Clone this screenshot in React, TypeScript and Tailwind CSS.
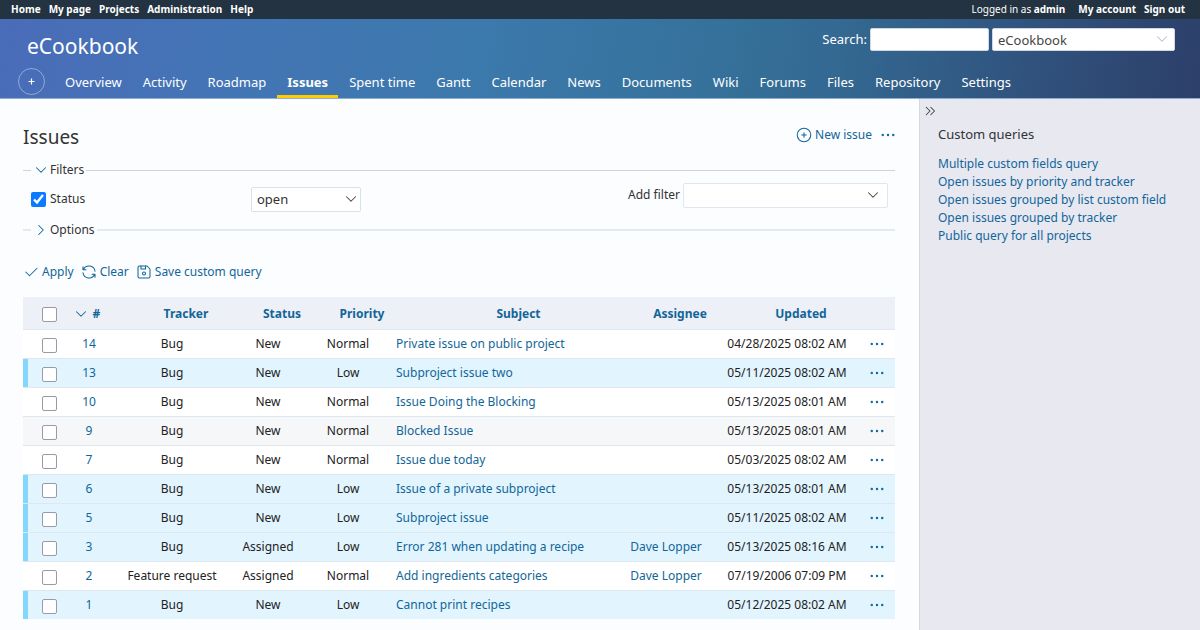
import type { ReactNode } from "react";

type Issue = {
  id: number;
  tracker: string;
  status: string;
  priority: string;
  subject: string;
  assignee?: string;
  updated: string;
};

const issues: Issue[] = [
  { id: 14, tracker: "Bug", status: "New", priority: "Normal", subject: "Private issue on public project", updated: "04/28/2025 08:02 AM" },
  { id: 13, tracker: "Bug", status: "New", priority: "Low", subject: "Subproject issue two", updated: "05/11/2025 08:02 AM" },
  { id: 10, tracker: "Bug", status: "New", priority: "Normal", subject: "Issue Doing the Blocking", updated: "05/13/2025 08:01 AM" },
  { id: 9, tracker: "Bug", status: "New", priority: "Normal", subject: "Blocked Issue", updated: "05/13/2025 08:01 AM" },
  { id: 7, tracker: "Bug", status: "New", priority: "Normal", subject: "Issue due today", updated: "05/03/2025 08:02 AM" },
  { id: 6, tracker: "Bug", status: "New", priority: "Low", subject: "Issue of a private subproject", updated: "05/13/2025 08:01 AM" },
  { id: 5, tracker: "Bug", status: "New", priority: "Low", subject: "Subproject issue", updated: "05/11/2025 08:02 AM" },
  { id: 3, tracker: "Bug", status: "Assigned", priority: "Low", subject: "Error 281 when updating a recipe", assignee: "Dave Lopper", updated: "05/13/2025 08:16 AM" },
  { id: 2, tracker: "Feature request", status: "Assigned", priority: "Normal", subject: "Add ingredients categories", assignee: "Dave Lopper", updated: "07/19/2006 07:09 PM" },
  { id: 1, tracker: "Bug", status: "New", priority: "Low", subject: "Cannot print recipes", updated: "05/12/2025 08:02 AM" },
];

const topLinks = ["Home", "My page", "Projects", "Administration", "Help"];

const tabs = [
  "Overview", "Activity", "Roadmap", "Issues", "Spent time", "Gantt", "Calendar",
  "News", "Documents", "Wiki", "Forums", "Files", "Repository", "Settings",
];

const queries = [
  "Multiple custom fields query",
  "Open issues by priority and tracker",
  "Open issues grouped by list custom field",
  "Open issues grouped by tracker",
  "Public query for all projects",
];

const columns = ["Tracker", "Status", "Priority", "Subject", "Assignee", "Updated"];

const checkbox =
  "block size-[15px] appearance-none rounded-[2px] border border-[#9a9aa6] bg-white";

function Icon({ children, className = "" }: { children: ReactNode; className?: string }) {
  return (
    <svg
      viewBox="0 0 24 24"
      fill="none"
      stroke="currentColor"
      strokeWidth="1.4"
      strokeLinecap="round"
      strokeLinejoin="round"
      aria-hidden="true"
      className={`size-[18px] shrink-0 ${className}`}
    >
      {children}
    </svg>
  );
}

function ChevronDown({ className }: { className?: string }) {
  return (
    <Icon className={className}>
      <path d="M6 9l6 6l6 -6" />
    </Icon>
  );
}

function Dots() {
  return (
    <Icon>
      <circle cx="5" cy="12" r="0.9" fill="currentColor" />
      <circle cx="12" cy="12" r="0.9" fill="currentColor" />
      <circle cx="19" cy="12" r="0.9" fill="currentColor" />
    </Icon>
  );
}

function TopBar() {
  return (
    <div className="flex h-[19px] items-start justify-between bg-[#233341] px-[11px] text-[10px] font-bold leading-[19px] text-white">
      <nav className="flex gap-2">
        {topLinks.map((label) => (
          <a key={label} href="#">{label}</a>
        ))}
      </nav>
      <div className="flex gap-2 pr-1">
        <span className="mr-[5px] font-normal">
          Logged in as <a href="#" className="font-bold">admin</a>
        </span>
        <a href="#">My account</a>
        <a href="#">Sign out</a>
      </div>
    </div>
  );
}

function Header() {
  return (
    <header className="flex h-20 flex-col justify-between border-b border-[#8fadd0] bg-linear-[100deg,#4a6cb9_0%,#4375b5_20%,#3c79ac_40%,#35719a_60%,#336891_70%,#30527d_86%,#2c3f69_100%] text-white">
      <div className="flex items-start justify-between pl-[27px] pr-[25px] pt-[9px]">
        <h1 className="pt-1 text-[21px] leading-7">eCookbook</h1>
        <form className="flex items-center gap-[3px] text-[13px]">
          <label htmlFor="search">Search:</label>
          <input id="search" type="text" className="h-[23px] w-[119px] rounded-[2px] border border-[#cfd8e4] bg-white px-1 text-[#333]" />
          <div className="relative">
            <select aria-label="Project" className="block h-[23px] w-[183px] appearance-none rounded-[2px] border border-[#cfd8e4] bg-white pl-[5px] pt-[2px] text-[#444]">
              <option>eCookbook</option>
            </select>
            <ChevronDown className="pointer-events-none absolute right-1 top-[2px] text-[#b4c2d3]" />
          </div>
        </form>
      </div>
      <div className="flex items-end pl-[18px]">
        <button type="button" aria-label="Add" className="mr-[10px] mb-[3px] flex size-[27px] items-center justify-center rounded-full border border-white/40">
          <svg width="7" height="7" viewBox="0 0 7 7" stroke="currentColor" strokeWidth="1.2" aria-hidden="true">
            <path d="M3.5 0.5v6M0.5 3.5h6" />
          </svg>
        </button>
        <nav className="flex gap-px text-[13px]">
          {tabs.map((tab) => (
            <a
              key={tab}
              href="#"
              className={
                tab === "Issues"
                  ? "border-b-3 border-[#ffcc00] px-[10px] pb-[3px] font-bold leading-5"
                  : "border-b-3 border-transparent px-[10px] pb-[3px] leading-5"
              }
            >
              {tab}
            </a>
          ))}
        </nav>
      </div>
    </header>
  );
}

function Filters() {
  return (
    <>
      <div className="mt-[9px] flex h-5 items-center">
        <span className="w-2 border-t border-[#ccd3dc]" />
        <button type="button" className="flex items-center pl-px pr-[2px]">
          <ChevronDown className="text-[#116699]" />
          Filters
        </button>
        <span className="grow border-t border-[#ccd3dc]" />
      </div>
      <div className="flex h-10 items-start pl-2 pr-[7px] pt-[3px]">
        <label className="mt-2 flex w-[220px] items-center gap-1">
          <input type="checkbox" defaultChecked className="size-[15px] accent-[#0a7aff]" />
          Status
        </label>
        <div className="relative mt-1">
          <select aria-label="Status filter" className="block h-[25px] w-[110px] appearance-none rounded-[2px] border border-[#d5e3ee] bg-white pl-[5px] text-[13px]">
            <option>open</option>
          </select>
          <ChevronDown className="pointer-events-none absolute right-[1px] top-[3px] text-[#444]" />
        </div>
        <div className="ml-auto flex items-center gap-[3px]">
          <label htmlFor="add-filter" className="pb-[2px]">Add filter</label>
          <div className="relative">
            <select id="add-filter" className="block h-[25px] w-[205px] appearance-none rounded-[2px] border border-[#dfe6ee] bg-white pl-[6px]">
              <option></option>
            </select>
            <ChevronDown className="pointer-events-none absolute right-[6px] top-[3px] text-[#444]" />
          </div>
        </div>
      </div>
      <div className="flex h-5 items-center">
        <span className="w-2 border-t-2 border-[#e3eaf0]" />
        <button type="button" className="flex items-center pl-px pr-[2px]">
          <Icon className="text-[#116699]">
            <path d="M9 6l6 6l-6 6" />
          </Icon>
          Options
        </button>
        <span className="grow border-t-2 border-[#e3eaf0]" />
      </div>
    </>
  );
}

function IssueTable() {
  return (
    <table className="mt-[15px] w-full table-fixed border-collapse text-center">
      <colgroup>
        <col className="w-[43px]" />
        <col className="w-[46px]" />
        <col className="w-[120px]" />
        <col className="w-[72px]" />
        <col className="w-[88px]" />
        <col />
        <col className="w-[98px]" />
        <col className="w-[144px]" />
        <col className="w-[36px]" />
      </colgroup>
      <thead>
        <tr className="h-8 border-b border-[#dce7f0] bg-[#eef0f8] text-[#116699]">
          <th className="p-0 pl-[19px] pt-[3px]">
            <input type="checkbox" aria-label="Select all" className={checkbox} />
          </th>
          <th className="p-0 pr-[6px] pt-[2px]">
            <a href="#" className="flex items-center justify-center gap-[3px]">
              <ChevronDown />#
            </a>
          </th>
          {columns.map((name) => (
            <th key={name} className="p-0 pl-7 pt-[2px]">
              <a href="#">{name}</a>
            </th>
          ))}
          <th className="p-0" aria-label="Actions" />
        </tr>
      </thead>
      <tbody className="text-[#222]">
        {issues.map((issue) => {
          const low = issue.priority === "Low";
          return (
            <tr
              key={issue.id}
              className={
                low
                  ? "h-[29px] border-b border-[#dce7f0] bg-[#e2f5ff] last:border-b-0"
                  : issue.id === 9
                    ? "h-[29px] border-b border-[#dce7f0] bg-[#f5f7f9]"
                    : "h-[29px] border-b border-[#dce7f0] bg-white"
              }
            >
              <td className="p-0">
                <div className={low ? "flex h-7 items-center border-l-5 border-[#83d7fb] pl-[14px] pt-1" : "flex h-7 items-center pl-[19px] pt-1"}>
                  <input type="checkbox" aria-label={`Select issue ${issue.id}`} className={checkbox} />
                </div>
              </td>
              <td className="p-0 text-[#116699]"><a href="#">{issue.id}</a></td>
              <td className="p-0">{issue.tracker}</td>
              <td className="p-0">{issue.status}</td>
              <td className="p-0">{issue.priority}</td>
              <td className="p-0 pl-1 text-left text-[#116699]"><a href="#">{issue.subject}</a></td>
              <td className="p-0 text-[#116699]">{issue.assignee && <a href="#">{issue.assignee}</a>}</td>
              <td className="p-0">{issue.updated}</td>
              <td className="p-0 text-[#116699]">
                <button type="button" aria-label="Actions" className="flex w-full justify-center">
                  <Dots />
                </button>
              </td>
            </tr>
          );
        })}
      </tbody>
    </table>
  );
}

export default function App() {
  return (
    <div className="flex min-h-screen flex-col bg-[#fcfdff] font-['Noto_Sans',sans-serif] text-xs text-[#333]">
      <TopBar />
      <Header />
      <div className="flex grow">
        <main className="min-w-0 grow pl-[23px] pr-6 pt-6">
          <div className="flex items-start justify-between">
            <h2 className="text-[19px] leading-7">Issues</h2>
            <div className="-mr-[2px] flex items-center gap-[7px] pt-[3px] text-[#116699]">
              <a href="#" className="flex items-center gap-[2px]">
                <Icon>
                  <path d="M3 12a9 9 0 1 0 18 0a9 9 0 0 0 -18 0" />
                  <path d="M9 12h6M12 9v6" />
                </Icon>
                New issue
              </a>
              <button type="button" aria-label="More actions"><Dots /></button>
            </div>
          </div>
          <Filters />
          <div className="-ml-px mt-[22px] flex h-5 items-center gap-[6px] text-[#116699]">
            <button type="button" className="flex items-center gap-[2px]">
              <Icon>
                <path d="M5 12l5 5l10 -10" />
              </Icon>
              Apply
            </button>
            <button type="button" className="flex items-center gap-[2px]">
              <Icon>
                <path d="M20 11a8.1 8.1 0 0 0 -15.5 -2m-.5 -4v4h4" />
                <path d="M4 13a8.1 8.1 0 0 0 15.5 2m.5 4v-4h-4" />
              </Icon>
              Clear
            </button>
            <button type="button" className="flex items-center gap-[2px]">
              <Icon>
                <path d="M6 4h10l4 4v10a2 2 0 0 1 -2 2h-12a2 2 0 0 1 -2 -2v-12a2 2 0 0 1 2 -2" />
                <circle cx="12" cy="14" r="2" />
                <path d="M14 4l0 4l-6 0l0 -4" />
              </Icon>
              Save custom query
            </button>
          </div>
          <IssueTable />
        </main>
        <aside className="w-[281px] shrink-0 border-l border-[#d5d8e2] bg-[#e8e8f1] pl-px pt-[3px]">
          <button type="button" aria-label="Collapse sidebar" className="block text-[#444]">
            <Icon>
              <path d="M7 7l5 5l-5 5" />
              <path d="M13 7l5 5l-5 5" />
            </Icon>
          </button>
          <div className="pl-[17px]">
            <h3 className="mt-1 text-[13px] leading-5">Custom queries</h3>
            <ul className="mt-[11px] leading-[18px] text-[#116699]">
              {queries.map((query) => (
                <li key={query}><a href="#">{query}</a></li>
              ))}
            </ul>
          </div>
        </aside>
      </div>
    </div>
  );
}
